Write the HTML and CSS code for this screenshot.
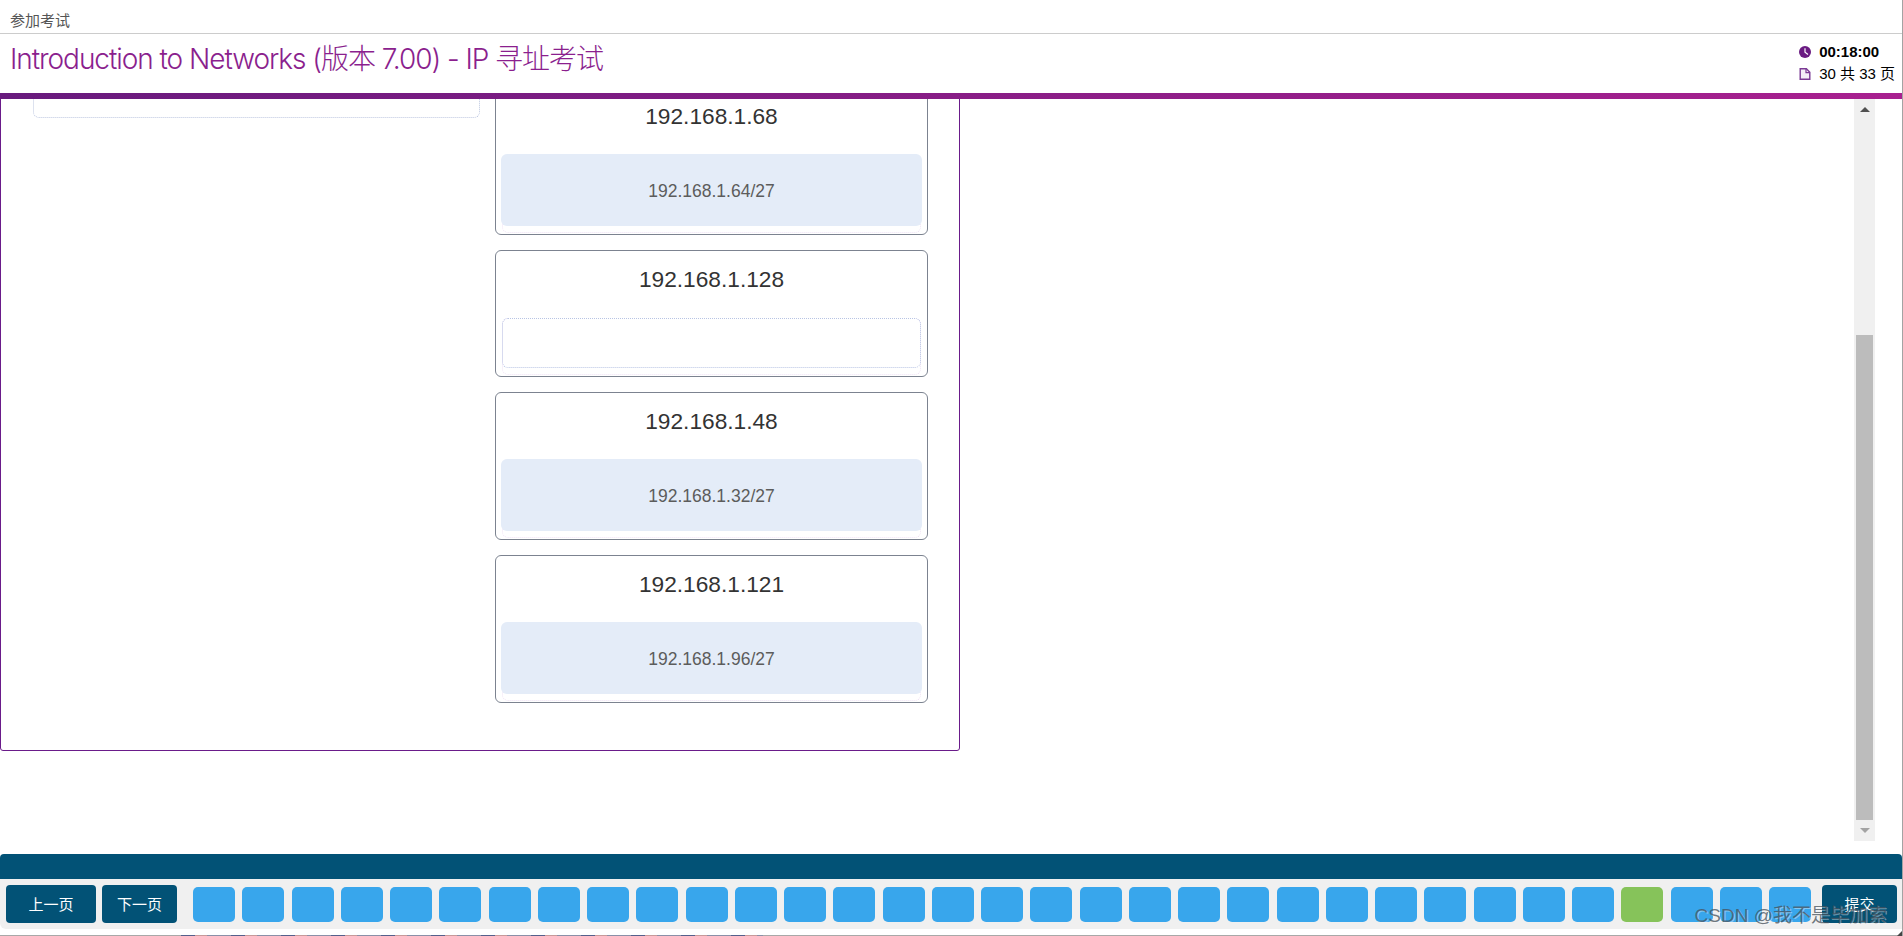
FILE: index.html
```html
<!DOCTYPE html>
<html lang="zh-CN">
<head>
<meta charset="utf-8">
<title>参加考试</title>
<link rel="stylesheet" href="styles.css">
</head>
<body>
<div class="window">
  <div class="crumb">参加考试</div>
  <header class="title-bar">
    <h1 class="title">Introduction to Networks (版本 7.00) - IP 寻址考试</h1>
    <div class="status">
      <div class="status-row status-time">
        <svg class="status-icon" viewBox="0 0 12 12"><circle cx="6" cy="6" r="6" fill="#6a1b82"/><path d="M6 2.2V6.3L9 8.4" fill="none" stroke="#fff" stroke-width="1.2"/></svg>
        <span>00:18:00</span>
      </div>
      <div class="status-row">
        <svg class="status-icon" viewBox="0 0 12 12"><path d="M1.2 .8H7.4L10.8 4.2V11.2H1.2Z" fill="#f4eef7" stroke="#7b3a94" stroke-width="1.4"/><path d="M7 .8V4.6H10.8" fill="none" stroke="#7b3a94" stroke-width="1.2"/></svg>
        <span>30 共 33 页</span>
      </div>
    </div>
  </header>
  <div class="accent"></div>
  <main class="main">
    <div class="viewport">
      <section class="question">
        <div class="source-zone"></div>
        <div class="cards">
          <div class="card">
            <div class="card-title">192.168.1.68</div>
            <div class="target"><div class="chip">192.168.1.64/27</div></div>
          </div>
          <div class="card card-empty">
            <div class="card-title">192.168.1.128</div>
            <div class="target"><div class="slot"></div></div>
          </div>
          <div class="card">
            <div class="card-title">192.168.1.48</div>
            <div class="target"><div class="chip">192.168.1.32/27</div></div>
          </div>
          <div class="card">
            <div class="card-title">192.168.1.121</div>
            <div class="target"><div class="chip">192.168.1.96/27</div></div>
          </div>
        </div>
      </section>
    </div>
    <div class="scrollbar">
      <div class="scroll-btn"><span class="arrow-up"></span></div>
      <div class="thumb"></div>
      <div class="scroll-btn"><span class="arrow-down"></span></div>
    </div>
  </main>
  <div class="band"></div>
  <footer class="footer">
    <button class="btn btn-prev">上一页</button>
    <button class="btn btn-next">下一页</button>
    <nav class="pages">
      <span class="page"></span><span class="page"></span><span class="page"></span><span class="page"></span><span class="page"></span>
      <span class="page"></span><span class="page"></span><span class="page"></span><span class="page"></span><span class="page"></span>
      <span class="page"></span><span class="page"></span><span class="page"></span><span class="page"></span><span class="page"></span>
      <span class="page"></span><span class="page"></span><span class="page"></span><span class="page"></span><span class="page"></span>
      <span class="page"></span><span class="page"></span><span class="page"></span><span class="page"></span><span class="page"></span>
      <span class="page"></span><span class="page"></span><span class="page"></span><span class="page"></span><span class="page page-current"></span>
      <span class="page"></span><span class="page"></span><span class="page"></span>
    </nav>
    <button class="btn btn-submit">提交</button>
  </footer>
  <div class="tail"></div>
  <div class="peek"><span class="peek-bits"></span></div>
  <div class="watermark">CSDN @我不是毕加索</div>
  <svg class="grip" viewBox="0 0 6 6"><path d="M6 0V6H0Z" fill="#444"/></svg>
</div>
</body>
</html>
```
FILE: styles.css
```css
* { box-sizing: border-box; }
html, body { margin: 0; padding: 0; height: 100%; overflow: hidden; background: #fff; }
body { font-family: "Liberation Sans", "Noto Sans CJK SC", sans-serif; color: #333; }

.window {
  position: relative;
  width: 1903px;
  height: 936px;
  display: flex;
  flex-direction: column;
  border-right: 1px solid #a3a3a3;
  overflow: hidden;
}

.crumb {
  height: 34px;
  padding: 12px 0 0 10px;
  font-size: 15px;
  line-height: 18px;
  color: #555;
  border-bottom: 1px solid #ccc;
}

.title-bar {
  height: 59px;
  display: flex;
  justify-content: space-between;
  padding: 0 7px 0 10px;
}
.title {
  margin: 8px 0 0;
  font-family: "Inter", "Noto Sans CJK SC", sans-serif;
  font-size: 28px;
  line-height: 34px;
  font-weight: 300;
  color: #8b1f8e;
  letter-spacing: -1.05px;
}
.status { padding-top: 7px; font-size: 15px; line-height: 22px; color: #000; }
.status-row { display: flex; align-items: center; gap: 8px; }
.status-time { font-weight: 700; }
.status-icon { width: 12px; height: 12px; flex: none; }

.accent { height: 6px; background: linear-gradient(90deg, #681a7d, #a8208f); }

.main { flex: 1; min-height: 0; display: flex; }
.viewport { flex: 1; min-width: 0; overflow: hidden; }

.question {
  width: 960px;
  margin-top: -40px;
  padding: 27px 31px 47px 32px;
  display: flex;
  align-items: flex-start;
  gap: 15px;
  border: 1px solid #6a1b8a;
  border-radius: 3px;
}
.source-zone {
  width: 447px;
  height: 31px;
  border: 1px dotted #bcc6e0;
  border-radius: 6px;
}
.cards { width: 433px; display: flex; flex-direction: column; gap: 15px; }
.card {
  border: 1px solid #7c8390;
  border-radius: 6px;
  padding: 0 6px 1px;
}
.card-title {
  height: 66px;
  padding-top: 8px;
  font-size: 22.7px;
  line-height: 41px;
  text-align: center;
  color: #333;
}
.card-empty .card-title { height: 67px; }
.target { height: 79px; border: 1px dotted #f0e2f5; border-radius: 6px; }
.card-empty .target { height: 57px; }
.chip {
  height: 72px;
  margin: -1px -2px 0;
  background: #e4ecf8;
  border-radius: 6px;
  font-size: 17.5px;
  line-height: 74px;
  text-align: center;
  color: #5c5c5c;
}
.slot {
  height: 50px;
  margin: -1px -1px 0;
  border: 1px dotted #b8c4e4;
  border-radius: 6px;
}

.scrollbar {
  width: 21px;
  margin: 0 27px 13px 0;
  display: flex;
  flex-direction: column;
  align-items: center;
  background: #f0f0f0;
}
.scroll-btn { width: 100%; height: 21px; flex: none; display: flex; align-items: center; justify-content: center; }
.thumb { width: 17px; height: 485px; margin-top: auto; background: #bcbcbc; }
.arrow-up { border: 5px solid transparent; border-top: 0; border-bottom: 5px solid #505050; }
.arrow-down { border: 5px solid transparent; border-bottom: 0; border-top: 5px solid #a3a3a3; }

.band { height: 25px; flex: none; background: #025276; border-radius: 4px 4px 0 0; }

.footer {
  height: 50px;
  flex: none;
  display: flex;
  align-items: flex-start;
  padding: 6px 5px 0 6px;
  background: #f0f0f0;
  border-bottom-left-radius: 6px;
}
.btn {
  height: 38px;
  flex: none;
  padding: 0 0 2px;
  border: 0;
  border-radius: 4px;
  background: #025276;
  color: #fff;
  font: 15px "Liberation Sans", "Noto Sans CJK SC", sans-serif;
}
.btn-prev { width: 90px; }
.btn-next { width: 75px; margin-left: 6px; }
.btn-submit { width: 75px; margin-left: 10px; }
.pages { width: 1619px; margin: 2px 0 0 16px; display: flex; gap: 7.25px; flex: none; }
.page { width: 42px; height: 35px; flex: none; background: #38a6ec; border-radius: 5px; }
.page-current { background: #86c35a; }

.tail { height: 6px; flex: none; }
.peek { height: 1px; flex: none; background: #a8a8a8; }
.peek-bits {
  display: block;
  width: 582px;
  height: 1px;
  margin-left: 181px;
  background: repeating-linear-gradient(90deg, #54608c 0 14px, #c89a9a 14px 26px, #8a90a8 26px 50px);
}

.watermark {
  position: absolute;
  right: 15px;
  top: 904px;
  font-size: 19px;
  line-height: 24px;
  color: rgba(70, 80, 90, .75);
  text-shadow: 1px 1px 0 rgba(255, 255, 255, .4);
  white-space: nowrap;
}
.grip { position: absolute; right: 0; bottom: 0; width: 5px; height: 5px; }
```
